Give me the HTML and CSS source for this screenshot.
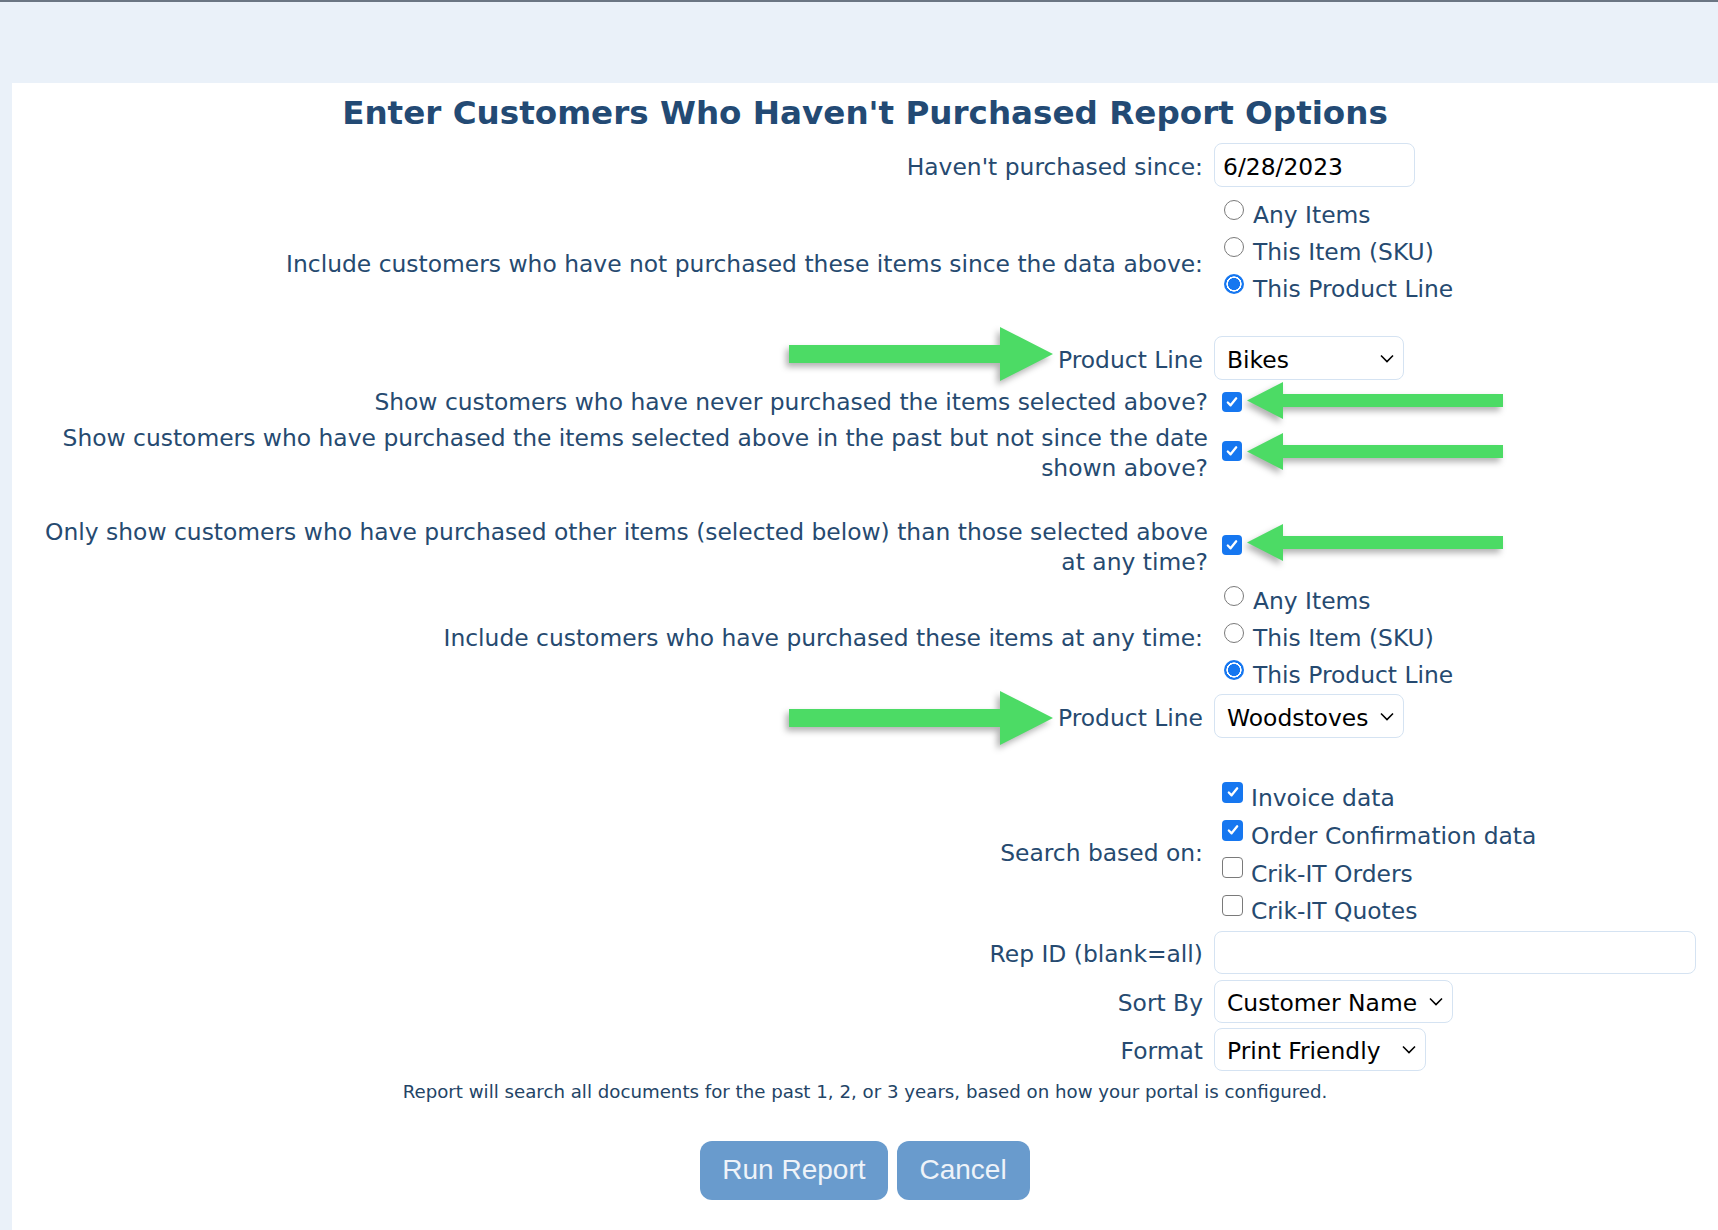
FILE: index.html
```html
<!DOCTYPE html>
<html lang="en">
<head>
<meta charset="utf-8">
<title>Customers Who Haven't Purchased Report Options</title>
<link rel="stylesheet" href="styles.css">
</head>
<body>
<div class="topband"></div>
<main class="panel">
  <h1 class="title">Enter Customers Who Haven't Purchased Report Options</h1>

  <div class="row r-date">
    <div class="lbl">Haven't purchased since:</div>
    <div class="ctl"><input class="field date" type="text" value="6/28/2023"></div>
  </div>

  <div class="row r-rad1">
    <div class="lbl">Include customers who have not purchased these items since the data above:</div>
    <div class="ctl opts opts-pad">
      <label class="opt"><input class="rad" type="radio" name="g1">Any Items</label>
      <label class="opt"><input class="rad" type="radio" name="g1">This Item (SKU)</label>
      <label class="opt"><input class="rad" type="radio" name="g1" checked>This Product Line</label>
    </div>
  </div>

  <div class="row r-pl1">
    <div class="lbl">Product Line</div>
    <div class="ctl"><select class="sel sel-pl"><option>Bikes</option></select></div>
  </div>

  <div class="row row-cb r-cb1">
    <div class="lbl">Show customers who have never purchased the items selected above?</div>
    <div class="ctl"><input class="chk" type="checkbox" checked></div>
  </div>

  <div class="row row-cb r-cb2">
    <div class="lbl">Show customers who have purchased the items selected above in the past but not since the date<br>shown above?</div>
    <div class="ctl"><input class="chk" type="checkbox" checked></div>
  </div>

  <div class="row row-cb r-cb3">
    <div class="lbl">Only show customers who have purchased other items (selected below) than those selected above<br>at any time?</div>
    <div class="ctl"><input class="chk" type="checkbox" checked></div>
  </div>

  <div class="row r-rad2">
    <div class="lbl">Include customers who have purchased these items at any time:</div>
    <div class="ctl opts">
      <label class="opt"><input class="rad" type="radio" name="g2">Any Items</label>
      <label class="opt"><input class="rad" type="radio" name="g2">This Item (SKU)</label>
      <label class="opt"><input class="rad" type="radio" name="g2" checked>This Product Line</label>
    </div>
  </div>

  <div class="row r-pl2">
    <div class="lbl">Product Line</div>
    <div class="ctl"><select class="sel sel-pl"><option>Woodstoves</option></select></div>
  </div>

  <div class="row r-search">
    <div class="lbl">Search based on:</div>
    <div class="ctl opts search">
      <label class="opt"><input class="chk chk-s" type="checkbox" checked>Invoice data</label>
      <label class="opt"><input class="chk chk-s" type="checkbox" checked>Order Confirmation data</label>
      <label class="opt"><input class="chk chk-s" type="checkbox">Crik-IT Orders</label>
      <label class="opt"><input class="chk chk-s" type="checkbox">Crik-IT Quotes</label>
    </div>
  </div>

  <div class="row r-rep">
    <div class="lbl">Rep ID (blank=all)</div>
    <div class="ctl"><input class="field rep" type="text" value=""></div>
  </div>

  <div class="row r-sort">
    <div class="lbl">Sort By</div>
    <div class="ctl"><select class="sel sel-sort"><option>Customer Name</option></select></div>
  </div>

  <div class="row r-format">
    <div class="lbl">Format</div>
    <div class="ctl"><select class="sel sel-format"><option>Print Friendly</option></select></div>
  </div>

  <p class="note">Report will search all documents for the past 1, 2, or 3 years, based on how your portal is configured.</p>

  <div class="buttons">
    <button class="btn" type="button">Run Report</button>
    <button class="btn" type="button">Cancel</button>
  </div>

  <svg class="arrow arrow-r a-r1" width="270" height="60" viewBox="0 0 270 60"><path d="M0 19H211V1L264 28L211 55V37H0Z"/></svg>
  <svg class="arrow arrow-r a-r2" width="270" height="60" viewBox="0 0 270 60"><path d="M0 19H211V1L264 28L211 55V37H0Z"/></svg>
  <svg class="arrow arrow-l a-l1" width="260" height="42" viewBox="0 0 260 42"><path d="M0 19.5L36 1V13H256V26H36V38Z"/></svg>
  <svg class="arrow arrow-l a-l2" width="260" height="42" viewBox="0 0 260 42"><path d="M0 19.5L36 1V13H256V26H36V38Z"/></svg>
  <svg class="arrow arrow-l a-l3" width="260" height="42" viewBox="0 0 260 42"><path d="M0 19.5L36 1V13H256V26H36V38Z"/></svg>
</main>
</body>
</html>
```

FILE: styles.css
```css
* { box-sizing: border-box; }

body {
  margin: 0;
  background: #eaf1f9;
  border-top: 2px solid #6b7683;
  font-family: "DejaVu Sans", Verdana, sans-serif;
  color: #264a70;
}

.topband { height: 81px; }

.panel {
  position: relative;
  margin-left: 12px;
  background: #fff;
  min-height: 1147px;
  padding-top: 10px;
}

.title {
  margin: 0;
  text-align: center;
  font-size: 32.6px;
  line-height: 40px;
  font-weight: bold;
  color: #234a74;
}

.row {
  display: flex;
  align-items: center;
  font-size: 23.4px;
}

.lbl {
  width: 1196px;
  flex: none;
  text-align: right;
  padding: 3px 5px 0 0;
  line-height: 30px;
}

.row-cb .lbl { padding: 0; }
.r-search .lbl { padding-top: 0; }

.ctl { margin-left: 6px; }
.row-cb .ctl { margin-left: 14px; display: flex; align-items: center; }

.r-date { margin-top: 10px; }
.r-rad1 { margin-top: 8px; }
.r-pl1 { margin-top: 6px; }
.r-cb1 { margin-top: 2px; height: 40px; }
.r-cb2 { margin-top: 1px; }
.r-cb3 { margin-top: 34px; }
.r-rad2 { margin-top: 4px; }
.r-pl2 { margin-top: 2px; }
.r-search { margin-top: 40px; }
.r-rep { margin-top: 2px; }
.r-sort { margin-top: 6px; }
.r-format { margin-top: 5px; }

.opts { display: flex; flex-direction: column; }
.opts-pad { padding-bottom: 24px; }

.opt {
  display: flex;
  align-items: center;
  height: 37px;
  padding-top: 3px;
  white-space: nowrap;
}
.search .opt { height: 37.7px; }

.field,
.sel {
  font-family: "DejaVu Sans", Verdana, sans-serif;
  font-size: 23.4px;
  color: #000;
  background-color: #fff;
  border: 1px solid #d5e3f2;
  border-radius: 8px;
  outline: none;
  margin: 0;
}

.field { padding: 3px 8px 0; }
.date { width: 201px; height: 44px; }
.rep { width: 482px; height: 43px; }

.sel {
  appearance: none;
  -webkit-appearance: none;
  padding: 3px 30px 0 12px;
  background-image: url("data:image/svg+xml,%3Csvg xmlns='http://www.w3.org/2000/svg' width='14' height='9' viewBox='0 0 14 9'%3E%3Cpath d='M1 1.5L7 7.5L13 1.5' fill='none' stroke='%23000' stroke-width='1.6'/%3E%3C/svg%3E");
  background-repeat: no-repeat;
  background-size: 14px 9px;
}
.sel-pl { width: 190px; height: 44px; background-position: right 9px center; }
.sel-sort { width: 239px; height: 43px; background-position: right 9px center; }
.sel-format { width: 212px; height: 43px; background-position: right 9px center; }

.rad {
  appearance: none;
  -webkit-appearance: none;
  width: 20px;
  height: 20px;
  margin: 0 9px 0 10px;
  border: 1px solid #7a7a7a;
  border-radius: 50%;
  background: #fff;
  flex: none;
  transform: translateY(-5px);
}
.rad:checked {
  border: none;
  background: radial-gradient(circle closest-side, #1677f0 0 58%, #fff 62% 74%, #1677f0 78%);
}

.chk {
  appearance: none;
  -webkit-appearance: none;
  width: 20px;
  height: 20px;
  margin: 0;
  border: 1.5px solid #7a7a7a;
  border-radius: 4px;
  background: #fff;
  flex: none;
}
.chk:checked {
  border: none;
  background: #1677f0 url("data:image/svg+xml,%3Csvg xmlns='http://www.w3.org/2000/svg' width='16' height='16' viewBox='0 0 16 16'%3E%3Cpath d='M3.2 8.6L6.4 11.8L12.8 3.8' fill='none' stroke='%23fff' stroke-width='2.6' stroke-linecap='round' stroke-linejoin='round'/%3E%3C/svg%3E") center / 14px 14px no-repeat;
}
.chk-s {
  width: 21px;
  height: 21px;
  margin: 0 8px 0 8px;
  transform: translateY(-6px);
}
.r-cb2 .chk, .r-cb3 .chk { transform: translateY(-2px); }

.note {
  margin: 9px 0 0;
  text-align: center;
  font-size: 18.2px;
  line-height: 24px;
  color: #234466;
}

.buttons {
  margin-top: 37px;
  display: flex;
  justify-content: center;
  gap: 9px;
}

.btn {
  height: 59px;
  padding: 0 22px;
  border: none;
  border-radius: 12px;
  background: #699bcd;
  color: #eef3f9;
  font-family: "Liberation Sans", Arial, sans-serif;
  font-size: 28px;
}
.btn + .btn { padding: 0 23px; }

.arrow {
  position: absolute;
  fill: #4cdb65;
  filter: drop-shadow(-3px 4px 3px rgba(0, 0, 0, 0.3));
}
.a-r1 { left: 777px; top: 243px; }
.a-r2 { left: 777px; top: 607px; }
.a-l1 { left: 1235px; top: 298px; }
.a-l2 { left: 1235px; top: 349px; }
.a-l3 { left: 1235px; top: 440px; }
```
